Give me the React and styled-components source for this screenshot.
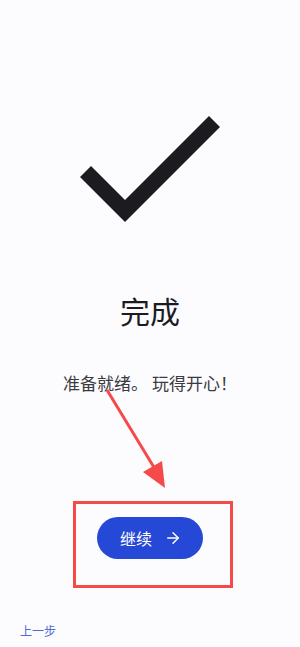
import React from "react";
import styled, { createGlobalStyle } from "styled-components";
import { ArrowRight } from "lucide-react";

const GlobalStyle = createGlobalStyle`
  html, body {
    margin: 0;
    padding: 0;
    background: #fcfbfe;
  }
  body {
    font-family: "Noto Sans CJK SC", "Noto Sans", sans-serif;
  }
`;

const Page = styled.div`
  position: relative;
  width: 300px;
  height: 647px;
  overflow: hidden;
  display: flex;
  flex-direction: column;
  align-items: center;
  padding-top: 113px;
  box-sizing: border-box;
  background: #fcfbfe;
  color: #1c1b1f;
`;

const Check = styled.svg`
  display: block;
  width: 142px;
  height: 110px;
`;

const Title = styled.h1`
  margin: 69px 0 0;
  font-size: 30px;
  line-height: 36px;
  font-weight: 400;
  color: #1c1b1f;
`;

const Subtitle = styled.p`
  margin: 43px 0 0;
  font-size: 17px;
  line-height: 24px;
  color: #3b3a40;
`;

const Highlight = styled.div`
  margin: 106px 0 0 6px;
  width: 160px;
  height: 87px;
  box-sizing: border-box;
  border: 3px solid #f44a4a;
  display: flex;
  align-items: flex-start;
  justify-content: flex-start;
  padding: 13px 0 0 21px;
`;

const NextButton = styled.button`
  width: 106px;
  height: 42px;
  border: none;
  border-radius: 21px;
  background: #2648d6;
  color: #ffffff;
  display: flex;
  align-items: center;
  gap: 12px;
  padding: 0 0 0 23px;
  box-sizing: border-box;
  font-family: inherit;
  font-size: 16px;
  cursor: pointer;
`;

const Back = styled.a`
  align-self: flex-start;
  margin: 35px 0 0 20px;
  font-size: 12px;
  line-height: 16px;
  color: #4d6bd3;
  text-decoration: none;
`;

const Annotation = styled.svg`
  position: absolute;
  left: 0;
  top: 0;
  width: 300px;
  height: 647px;
  pointer-events: none;
`;

export default function App() {
  return (
    <>
      <GlobalStyle />
      <Page>
        <Check viewBox="0 0 142 110">
          <polygon
            points="12,53 46,87 130,3 141,14 46,109 1,64"
            fill="#1c1b1f"
          />
        </Check>
        <Title>完成</Title>
        <Subtitle>准备就绪。 玩得开心！</Subtitle>
        <Highlight>
          <NextButton>
            <span>继续</span>
            <ArrowRight size={18} strokeWidth={2} />
          </NextButton>
        </Highlight>
        <Back href="#">上一步</Back>
        <Annotation viewBox="0 0 300 647">
          <line x1="107" y1="390" x2="155" y2="469" stroke="#f44a4a" strokeWidth="3" />
          <polygon points="165,488 143,472 162,461" fill="#f44a4a" />
        </Annotation>
      </Page>
    </>
  );
}
